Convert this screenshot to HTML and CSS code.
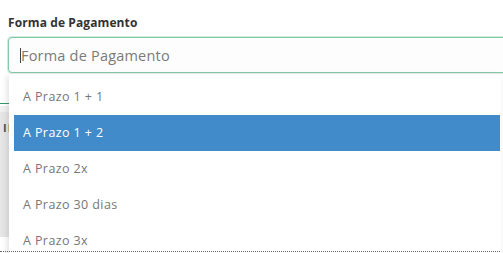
FILE: index.html
```html
<!DOCTYPE html>
<html lang="pt">
<head>
<meta charset="utf-8">
<link rel="stylesheet" href="styles.css">
</head>
<body>
<div class="page">
  <div class="field">
    <label class="label">Forma de Pagamento</label>
    <div class="input"><span class="caret"></span><span class="placeholder">Forma de Pagamento</span></div>
  </div>
  <div class="behind">
    <div class="tabline"></div>
    <div class="table-head"><span class="col">II</span></div>
  </div>
  <ul class="dropdown">
    <li class="opt">A Prazo 1 + 1</li>
    <li class="opt active">A Prazo 1 + 2</li>
    <li class="opt">A Prazo 2x</li>
    <li class="opt">A Prazo 30 dias</li>
    <li class="opt">A Prazo 3x</li>
  </ul>
  <div class="dotted"></div>
</div>
</body>
</html>
```
FILE: styles.css
```css
html, body {
  margin: 0;
  padding: 0;
  background: #fff;
  overflow: hidden;
}
.page {
  position: relative;
  width: 503px;
  height: 253px;
  overflow: hidden;
  font-family: "Open Sans", "Liberation Sans", sans-serif;
}
.field {
  padding: 15px 0 0 8px;
}
.label {
  display: block;
  font-size: 12px;
  font-weight: 700;
  color: #333;
  line-height: 16px;
  height: 16px;
  margin-bottom: 6px;
  letter-spacing: 0.1px;
}
.input {
  display: flex;
  align-items: center;
  height: 34px;
  margin-right: -10px;
  border: 1px solid #84c9a5;
  box-shadow: 0 0 0 1px rgba(160, 215, 187, 0.5);
  border-radius: 4px 0 0 4px;
  padding-left: 11px;
  background: #fdfdfd;
}
.caret {
  width: 1px;
  height: 15px;
  background: #444;
}
.placeholder {
  font-size: 14.5px;
  color: #7a7a7a;
  letter-spacing: 0.2px;
}
.behind {
  padding-top: 30px;
}
.tabline {
  height: 1px;
  background: #2f9c6a;
  width: 12px;
}
.table-head {
  margin-top: 2px;
  height: 125px;
  width: 12px;
  background: #e6e6e6;
  border-top: 6px solid #f1f1f1;
}
.col {
  display: block;
  padding: 8px 0 0 3px;
  font-size: 11px;
  font-weight: 700;
  color: #555;
  letter-spacing: 1px;
}
.dropdown {
  position: absolute;
  left: 9px;
  top: 73px;
  width: 486px;
  margin: 0;
  padding: 5px 1px 0 5px;
  list-style: none;
  background: #fff;
  border-top: 1px solid #e6e6e6;
  box-shadow: -2px 3px 6px rgba(0, 0, 0, 0.12);
  height: 200px;
}
.opt {
  height: 36px;
  line-height: 36px;
  padding-left: 9px;
  font-size: 12.5px;
  color: #777;
  letter-spacing: 0.4px;
}
.opt.active {
  background: #428bca;
  color: #fff;
}
.dotted {
  position: absolute;
  left: 0;
  top: 251px;
  width: 500px;
  border-top: 1px dotted #666;
}
```
